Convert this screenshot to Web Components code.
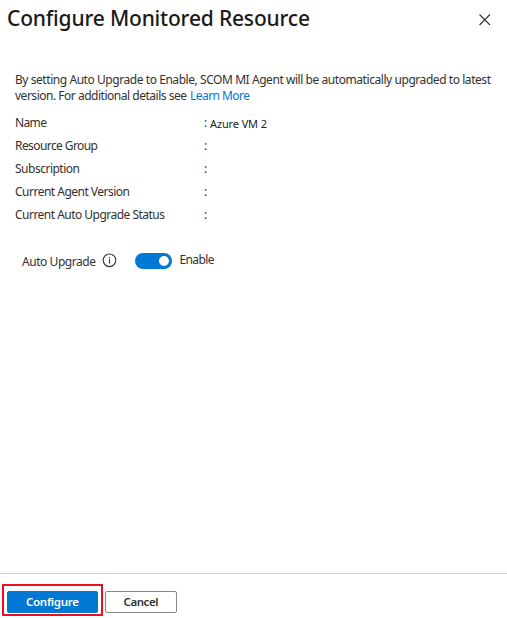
<!DOCTYPE html>
<html lang="en">
<head>
<meta charset="utf-8">
<title>Configure Monitored Resource</title>
<style>
html, body { margin: 0; height: 100%; background: #fff; overflow: hidden; }
body { font-family: "Noto Sans", "Open Sans", sans-serif; font-size: 12px; color: #323130; }
</style>
</head>
<body>
<config-panel></config-panel>
<script>
const define = (name, html, ready) => customElements.define(name, class extends HTMLElement {
  connectedCallback() {
    if (this.shadowRoot) return;
    const t = document.createElement('template');
    t.innerHTML = html;
    this.attachShadow({ mode: 'open' }).append(t.content.cloneNode(true));
    if (ready) ready(this);
  }
});

/* A single line of text whose tracking is adjusted to a given width. */
define('fit-text', `<style>
  :host { display: inline-block; white-space: pre; }
  span { display: inline-block; }
</style><span><slot></slot></span>`, el => {
  const span = el.shadowRoot.querySelector('span');
  const n = el.textContent.length;
  const target = +el.getAttribute('width');
  const spacing = (target - span.getBoundingClientRect().width) / (n - 1);
  span.style.letterSpacing = spacing + 'px';
  span.style.marginRight = -spacing + 'px';
});

define('panel-header', `<style>
  :host { display: flex; justify-content: space-between; align-items: flex-start; height: 72px; padding: 0 16px 0 7px; box-sizing: border-box; }
  h1 { margin: 3px 0 0; font-size: 21px; line-height: 30px; font-weight: 500; color: #1b1a19; }
  svg { display: block; margin-top: 14px; }
</style>
<h1><slot></slot></h1>
<svg width="12" height="12" viewBox="0 0 12 12"><path d="M.5.5l10.5 10.5M11 .5L.5 11" fill="none" stroke="#323130" stroke-width="1.1"/></svg>`);

define('text-link', `<style>
  :host { display: inline; } a { color: #0078d4; cursor: pointer; }
</style><a><slot></slot></a>`);

define('detail-row', `<style>
  :host { display: grid; grid-template-columns: 189px 6px 1fr; height: 22.9px; line-height: 18px; }
  .value { color: #222; font-size: 11px; padding-top: 1px; }
</style><span><slot name="label"></slot></span><span>:</span><span class="value"><slot></slot></span>`);

define('info-icon', `<style>:host { display: block; width: 15px; height: 15px; }</style>
<svg width="15" height="15" viewBox="0 0 15 15" style="display:block"><circle cx="7.5" cy="7.3" r="6.3" fill="none" stroke="#323130" stroke-width="1.1"/><path d="M7.5 6.3v4.2M7.5 4v1.2" stroke="#323130" stroke-width="1.1"/></svg>`);

define('toggle-switch', `<style>
  :host { display: flex; align-items: center; justify-content: flex-end; width: 37px; height: 16px; border-radius: 8px; background: #0078d4; padding-right: 3.5px; box-sizing: border-box; }
  i { width: 10px; height: 10px; border-radius: 50%; background: #fff; }
</style><i></i>`);

define('action-button', `<style>
  :host { display: block; }
  button { display: flex; align-items: center; justify-content: center; box-sizing: border-box; width: 72px; height: 22px; padding: 0; border: 1px solid #8a8886; border-radius: 2px; background: #fff; color: #323130; font: 600 11.5px/16px "Noto Sans", "Open Sans", sans-serif; }
  :host([primary]) button { width: 91px; background: #0078d4; border-color: #0078d4; color: #fff; }
</style><button><slot></slot></button>`);

define('highlight-frame', `<style>
  :host { display: block; box-sizing: border-box; width: 101px; height: 32px; border: 2px solid #e81123; padding: 5px 3px 3px; }
</style><slot></slot>`);

define('config-panel', `<style>
  :host { display: flex; flex-direction: column; height: 618px; width: 507px; }
  main { flex: 1; padding: 0 15px; }
  p { margin: 0 0 9px; line-height: 16px; }
  p div { height: 16px; display: flex; gap: 3px; }
  .toggle { display: flex; align-items: flex-start; padding: 21px 0 0 7px; line-height: 18px; }
  .toggle > .name { padding-top: 4px; }
  info-icon { margin: 4px 0 0 6.5px; }
  toggle-switch { margin: 4px 7px 0 18px; }
  .toggle > .state { padding-top: 2px; }
  footer { display: flex; align-items: flex-start; gap: 2px; height: 45px; box-sizing: border-box; border-top: 1px solid #d2d0ce; padding: 10px 0 0 2px; }
  footer > action-button { padding-top: 7px; }
</style>
<panel-header><fit-text width="303">Configure Monitored Resource</fit-text></panel-header>
<main>
  <p><div class="l1"></div></p>
  <detail-row><fit-text slot="label" width="32">Name</fit-text><fit-text width="57">Azure VM 2</fit-text></detail-row>
  <detail-row><fit-text slot="label" width="83">Resource Group</fit-text></detail-row>
  <detail-row><fit-text slot="label" width="65">Subscription</fit-text></detail-row>
  <detail-row><fit-text slot="label" width="115">Current Agent Version</fit-text></detail-row>
  <detail-row><fit-text slot="label" width="150">Current Auto Upgrade Status</fit-text></detail-row>
  <div class="toggle">
    <span class="name"><fit-text width="74">Auto Upgrade</fit-text></span>
    <info-icon></info-icon>
    <toggle-switch></toggle-switch>
    <span class="state"><fit-text width="35">Enable</fit-text></span>
  </div>
</main>
<footer>
  <highlight-frame><action-button primary><fit-text width="53">Configure</fit-text></action-button></highlight-frame>
  <action-button><fit-text width="35">Cancel</fit-text></action-button>
</footer>`.replace('<p><div class="l1"></div></p>', `<style>.intro{margin-bottom:10px;line-height:16px}.intro>div{display:flex;gap:3px;height:16px}</style>
<div class="intro"><div><fit-text width="476">By setting Auto Upgrade to Enable, SCOM MI Agent will be automatically upgraded to latest</fit-text></div>
<div><fit-text width="172">version. For additional details see</fit-text><text-link><fit-text width="60">Learn More</fit-text></text-link></div></div>`));
</script>
</body>
</html>
